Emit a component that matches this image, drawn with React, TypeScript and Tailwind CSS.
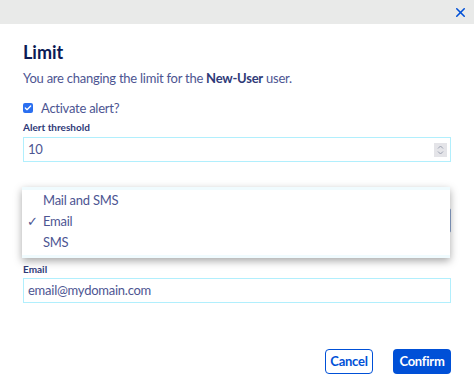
import { Check, X } from "lucide-react";

const font = { fontFamily: "Lato, 'Noto Sans', sans-serif" };

export default function App() {
  return (
    <div className="w-[474px] h-[390px] bg-white text-[#4d5592] overflow-hidden tracking-[-0.25px]" style={font}>
      <div className="h-6 bg-[#e9eae9] flex items-center justify-end pr-[6px]">
        <X className="w-[15px] h-[15px] text-[#0050d7]" strokeWidth={2.5} />
      </div>
      <div className="px-[23px]">
        <h2 className="mt-[16px] text-[18px] leading-6 font-bold text-[#0b1a55] tracking-normal">Limit</h2>
        <p className="mt-[4px] text-[13px] leading-5">
          You are changing the limit for the <strong className="font-bold text-[#2f3a78]">New-User</strong> user.
        </p>
        <label className="mt-[10px] flex items-center gap-2 text-[13px] leading-5">
          <span className="w-[10px] h-[10px] rounded-[2px] bg-[#2b6ff0] flex items-center justify-center">
            <Check className="w-[8px] h-[8px] text-white" strokeWidth={4} />
          </span>
          Activate alert?
        </label>
        <div className="mt-[1px] text-[10px] leading-4 font-bold text-[#2f3a78] tracking-normal">Alert threshold</div>
        <div className="mt-[2px] h-[25px] border border-[#b1effd] flex items-center justify-between pl-[4px] pr-[3px] text-[13px]">
          <span>10</span>
          <span className="w-[13px] h-[14px] bg-[#e4e4e8] flex items-center justify-center">
            <svg width="7" height="10" viewBox="0 0 7 10" fill="none" stroke="#9aa0b0" strokeWidth="1">
              <path d="M1 3.5 L3.5 1 L6 3.5" />
              <path d="M1 6.5 L3.5 9 L6 6.5" />
            </svg>
          </span>
        </div>
        <div className="relative mt-[24px]">
          <div className="h-4" />
          <div className="mt-[6px] h-[25px] border border-[#8ea6d0] rounded-[2px]" />
          <div className="absolute left-[-1px] top-[1px] w-[428px] h-[71px] bg-white shadow-[0_3px_8px_rgba(0,0,0,0.35)] border-t-[3px] border-b-[3px] border-[#f0fbfe] text-[13px]">
            <div className="h-[21px] flex items-center pl-[21px]">Mail and SMS</div>
            <div className="h-[21px] flex items-center relative pl-[21px]">
              <span className="absolute left-[5px]">✓</span>
              Email
            </div>
            <div className="h-[21px] flex items-center pl-[21px]">SMS</div>
          </div>
        </div>
        <div className="mt-[28px] text-[10px] leading-4 font-bold text-[#2f3a78] tracking-normal">Email</div>
        <div className="mt-[1px] h-[25px] border border-[#b1effd] flex items-center pl-[4px] text-[13px]">
          email@mydomain.com
        </div>
        <div className="mt-[46px] flex justify-end gap-5">
          <button className="h-[25px] w-12 border border-[#0050d7] rounded-[4px] text-[#0050d7] text-[13px] font-bold">Cancel</button>
          <button className="h-[25px] w-[58px] bg-[#0050d7] rounded-[4px] text-white text-[13px] font-bold">Confirm</button>
        </div>
      </div>
    </div>
  );
}
